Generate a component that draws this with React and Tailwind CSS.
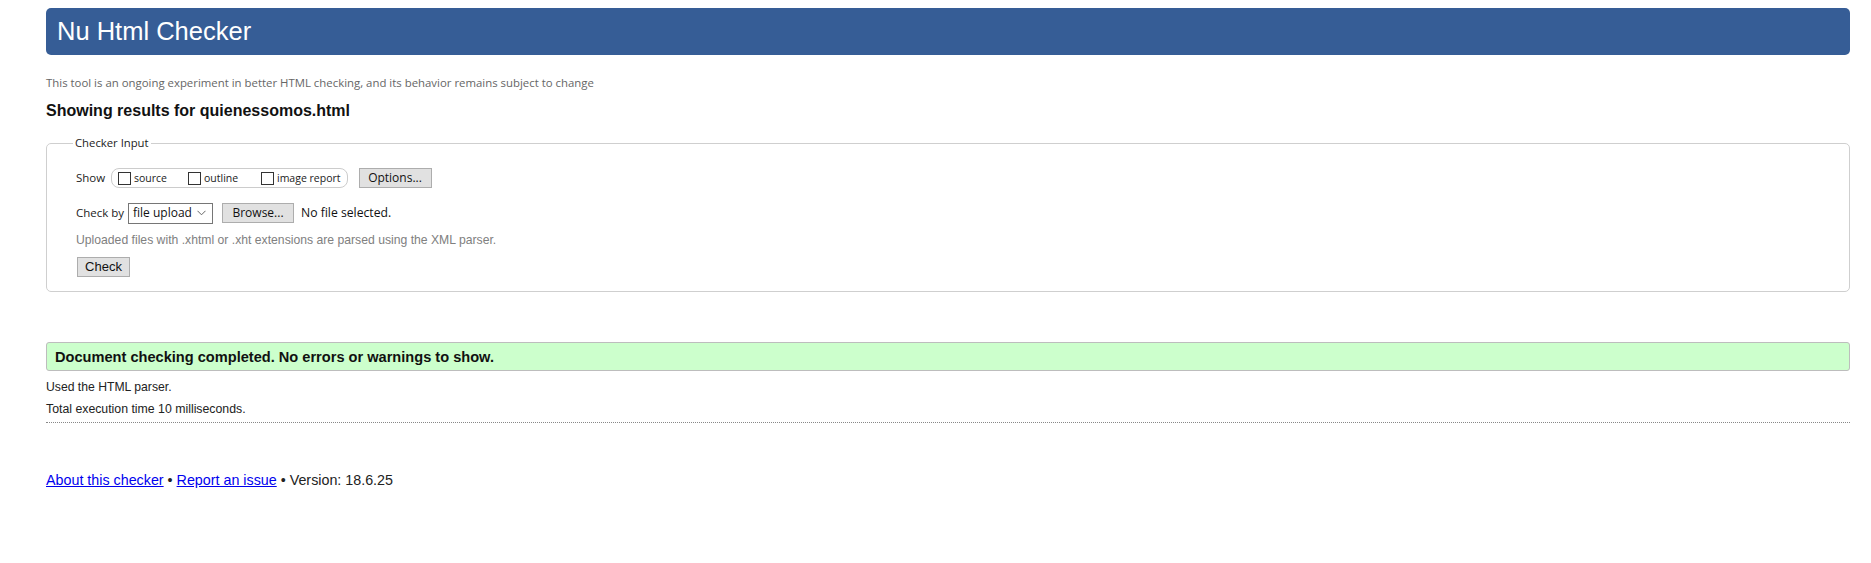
import React from "react";

function Box({ label, className = "" }) {
  return (
    <label className={"flex items-center " + className}>
      <span className="inline-block w-[13px] h-[13px] border border-[#333] bg-white" />
      <span className="ml-[3px] text-[10.5px] leading-[14px] text-[#222]">{label}</span>
    </label>
  );
}

export default function App() {
  return (
    <div className="min-h-[563px] bg-white pl-[46px] pr-[21px] pt-[8px] font-['Liberation_Sans',Arial,sans-serif] text-[#222]">
      <header className="h-[47px] rounded-[5px] bg-[#365d96] px-[11px] flex items-center">
        <h1 className="text-white text-[25.5px] leading-none font-normal">Nu Html Checker</h1>
      </header>

      <p className="mt-[20px] font-['Open_Sans',sans-serif] text-[11.4px] leading-[15px] text-[#666]">
        This tool is an ongoing experiment in better HTML checking, and its behavior remains subject to change
      </p>

      <h2 className="mt-[12px] text-[16px] leading-[18px] font-bold text-[#111]">
        Showing results for quienessomos.html
      </h2>

      <fieldset className="mt-[15px] border border-[#cfcfcf] rounded-[5px] pl-[29px] pb-[14px] font-['Open_Sans',sans-serif]">
        <legend className="-ml-[3px] px-[2px] text-[11.3px] leading-[16px] text-[#222]">Checker Input</legend>

        <div className="mt-[16px] h-[22px] flex items-center">
          <span className="w-[35px] text-[11.5px] leading-[14px]">Show</span>
          <div className="h-[20px] flex items-center border border-[#ccc] rounded-[8px] pl-[6px] pr-[6px]">
            <Box label="source" className="w-[70px]" />
            <Box label="outline" className="w-[73px]" />
            <Box label="image report" />
          </div>
          <button className="ml-[11px] w-[73px] h-[20px] bg-[#e1e1e1] border border-[#adadad] text-[12px] leading-[14px] text-[#111]">
            Options...
          </button>
        </div>

        <div className="mt-[13px] h-[22px] flex items-center">
          <span className="w-[52px] text-[11.5px] leading-[14px]">Check by</span>
          <div className="w-[85px] h-[21px] border border-[#767676] bg-white flex items-center justify-between pl-[4px] pr-[6px]">
            <span className="text-[12px] leading-[14px] text-[#111]">file upload</span>
            <svg width="9" height="6" viewBox="0 0 9 6" fill="none">
              <path d="M0.5 0.8 L4.5 4.8 L8.5 0.8" stroke="#666" strokeWidth="1" />
            </svg>
          </div>
          <button className="ml-[9px] w-[72px] h-[20px] bg-[#e1e1e1] border border-[#adadad] text-[12px] leading-[14px] text-[#111]">
            Browse...
          </button>
          <span className="ml-[7px] text-[12.2px] leading-[14px] text-[#111]">No file selected.</span>
        </div>

        <p className="mt-[9px] font-['Liberation_Sans',Arial,sans-serif] text-[12.2px] leading-[14px] text-[#808080]">
          Uploaded files with .xhtml or .xht extensions are parsed using the XML parser.
        </p>

        <button className="mt-[10px] ml-[1px] w-[53px] h-[20px] bg-[#e1e1e1] border border-[#adadad] font-['Liberation_Sans',Arial,sans-serif] text-[13px] leading-[14px] text-[#111]">
          Check
        </button>
      </fieldset>

      <div className="mt-[50px] h-[29px] bg-[#ccffcc] border border-[#bdbdbd] rounded-[3px] pl-[8px] flex items-center">
        <p className="text-[14.6px] leading-[16px] font-bold text-[#111]">
          Document checking completed. No errors or warnings to show.
        </p>
      </div>

      <p className="mt-[9px] text-[12.2px] leading-[14px]">Used the HTML parser.</p>
      <p className="mt-[8px] text-[12.3px] leading-[14px]">Total execution time 10 milliseconds.</p>
      <div className="mt-[6px] border-t border-dotted border-[#888]" />

      <p className="mt-[49px] text-[14.3px] leading-[16px] text-[#222]">
        <a href="#" className="text-[#0000ee] underline">About this checker</a>
        {" • "}
        <a href="#" className="text-[#0000ee] underline">Report an issue</a>
        {" • Version: 18.6.25"}
      </p>
    </div>
  );
}
